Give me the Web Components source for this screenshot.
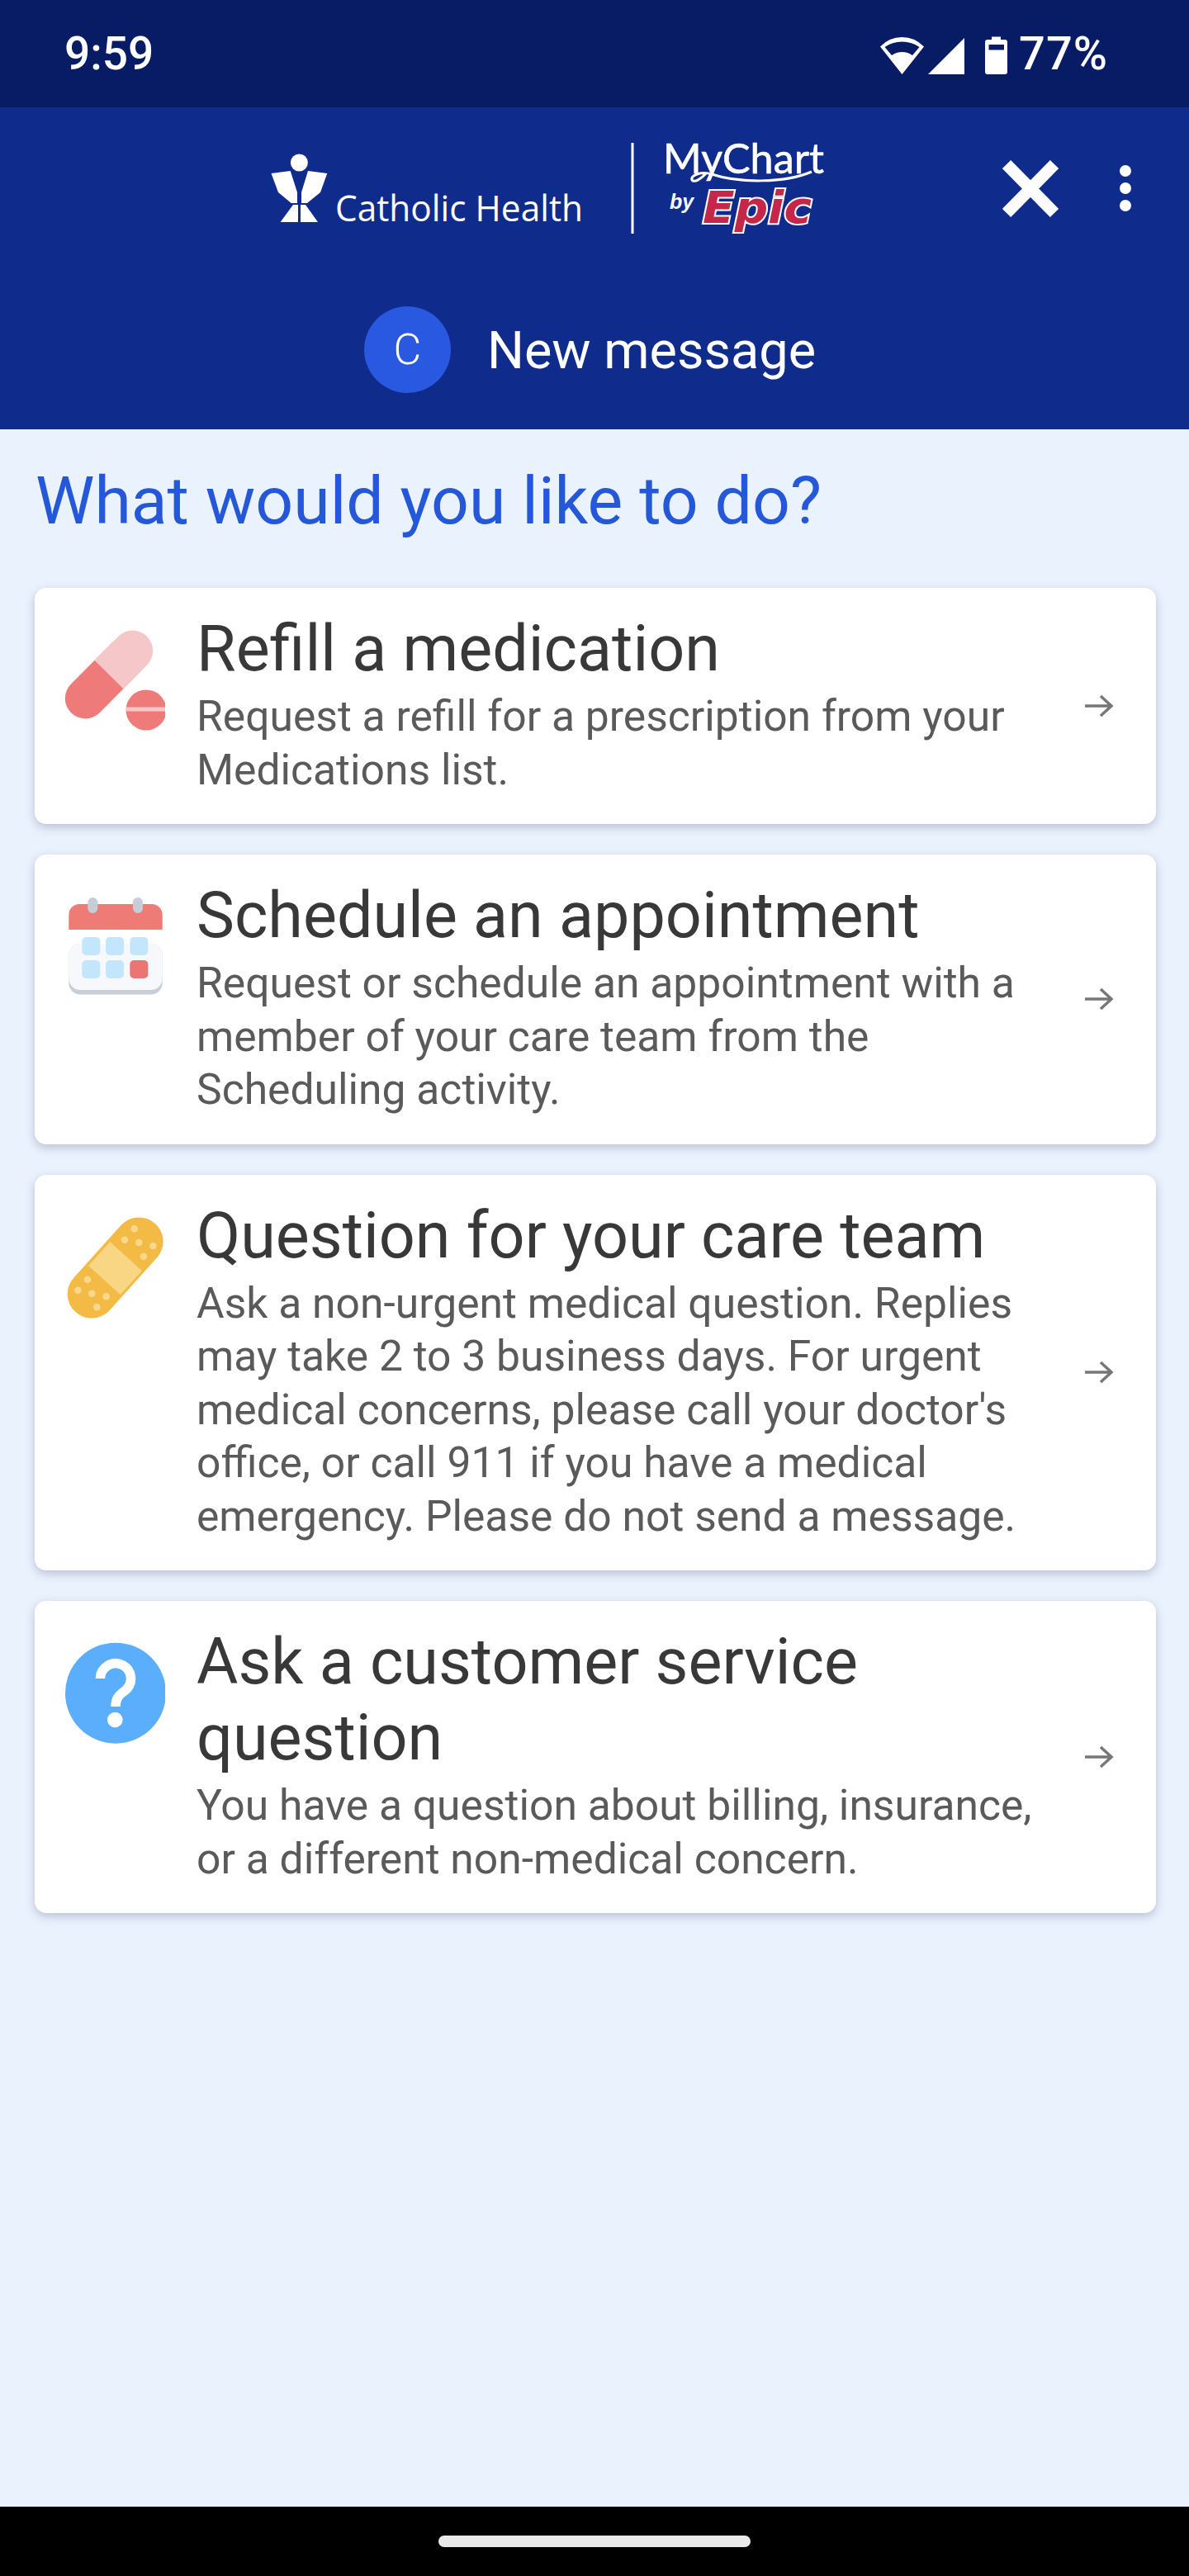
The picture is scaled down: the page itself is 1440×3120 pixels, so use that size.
<!DOCTYPE html>
<html lang="en">
<head>
<meta charset="utf-8">
<style>
  html, body { margin: 0; padding: 0; }
  body { width: 1440px; height: 3120px; overflow: hidden; background: #eaf2fd; font-family: Roboto, "Liberation Sans", sans-serif; }
  .app { display: flex; flex-direction: column; height: 3120px; }
  .app page-body { flex: 1; }
</style>
</head>
<body>
<div class="app">
  <status-bar time="9:59" level="77%"></status-bar>
  <app-header title-text="New message" initial="C"></app-header>
  <page-body heading="What would you like to do?">
    <option-card title-text="Refill a medication">
      <svg slot="icon" viewBox="0 0 128 128" width="128" height="128">
        <g transform="translate(60 57) rotate(-45.2)">
          <rect x="-65.2" y="-24.5" width="120" height="49" rx="24.5" fill="#ee7b79"/>
          <path d="M0 -24.5H40.7A24.5 24.5 0 0 1 40.7 24.5H0Z" fill="#f6c7c9"/>
        </g>
        <circle cx="105" cy="100" r="24.5" fill="#ee7b79"/>
        <rect x="80.5" y="96.5" width="49" height="5" fill="#f9c8c8"/>
      </svg>
      Request a refill for a prescription from your<br>Medications list.
    </option-card>
    <option-card title-text="Schedule an appointment">
      <svg slot="icon" viewBox="0 0 128 128" width="128" height="128">
        <rect x="11.3" y="60" width="113.4" height="61.5" rx="14" fill="#c8ced6"/>
        <rect x="11.3" y="60" width="113.4" height="56" rx="14" fill="#f6f8fb"/>
        <path d="M11.3 43V25a13 13 0 0 1 13-13H111.700a13 13 0 0 1 13 13V43Z" fill="#ee7b76"/>
        <rect x="34.300" y="4" width="12" height="19" rx="6" fill="#c5ced6"/>
        <rect x="89" y="4" width="12" height="19" rx="6" fill="#c5ced6"/>
        <rect x="27.300" y="52" width="22" height="22" rx="5" fill="#c3e6fd"/>
        <rect x="56" y="52" width="22" height="22" rx="5" fill="#c3e6fd"/>
        <rect x="85.300" y="52" width="22" height="22" rx="5" fill="#c3e6fd"/>
        <rect x="27.300" y="80" width="22" height="22" rx="5" fill="#c3e6fd"/>
        <rect x="56" y="80" width="22" height="22" rx="5" fill="#c3e6fd"/>
        <rect x="85.300" y="80" width="22" height="22" rx="5" fill="#ec7472"/>
      </svg>
      Request or schedule an appointment with a<br>member of your care team from the<br>Scheduling activity.
    </option-card>
    <option-card title-text="Question for your care team">
      <svg slot="icon" viewBox="0 0 128 128" width="128" height="128">
        <line x1="39" y1="96.300" x2="96.300" y2="32.700" stroke="#f3bb45" stroke-width="58.600" stroke-linecap="round"/>
        <g transform="translate(67.500 65) rotate(-48)"><rect x="-19.500" y="-26" width="39" height="52" fill="#f8d684"/></g>
        <g fill="#f8d98c">
          <circle cx="90.700" cy="17.300" r="4.300"/><circle cx="79" cy="30.700" r="4.300"/><circle cx="96.300" cy="34" r="4.300"/><circle cx="113.300" cy="38" r="4.300"/><circle cx="102" cy="50.700" r="4.300"/>
          <circle cx="34" cy="78.700" r="4.300"/><circle cx="22.300" cy="91.700" r="4.300"/><circle cx="39.300" cy="95.700" r="4.300"/><circle cx="56.700" cy="99.300" r="4.300"/><circle cx="45.300" cy="112.300" r="4.300"/>
        </g>
      </svg>
      Ask a non-urgent medical question. Replies<br>may take 2 to 3 business days. For urgent<br>medical concerns, please call your doctor's<br>office, or call 911 if you have a medical<br>emergency. Please do not send a message.
    </option-card>
    <option-card title-text="Ask a customer service question">
      <svg slot="icon" viewBox="0 0 128 128" width="128" height="128">
        <circle cx="68" cy="63.700" r="61" fill="#5aaefc"/>
        <path d="M49.500 46A18.500 18.500 0 1 1 79 61C72 66 68 70 68 80" fill="none" stroke="#fff" stroke-width="11.500"/>
        <circle cx="67.300" cy="96" r="9.300" fill="#fff"/>
      </svg>
      You have a question about billing, insurance,<br>or a different non-medical concern.
    </option-card>
  </page-body>
  <nav-bar></nav-bar>
</div>

<script>
class StatusBar extends HTMLElement {
  constructor() {
    super();
    this.attachShadow({ mode: "open" });
  }
  connectedCallback() {
    this.shadowRoot.innerHTML = `
      <style>
        :host {
          display: flex;
          align-items: flex-start;
          justify-content: space-between;
          height: 130px;
          box-sizing: border-box;
          padding: 32px 98px 0 78px;
          background: #071c64;
          color: #fff;
          font: 500 55px/66px Roboto, sans-serif;
        }
        .right { display: flex; align-items: flex-start; }
        svg { display: block; margin-top: 10px; }
        .pct { font-size: 56px; letter-spacing: 1px; }
      </style>
      <span>${this.getAttribute("time")}</span>
      <div class="right">
        <svg width="170" height="48" viewBox="1065 40 170 48">
          <path fill-rule="evenodd" fill="#fff" d="M1093.500 88L1067 54.500Q1078 43 1093.500 43T1120 54.500ZM1072.500 55L1081 65Q1086.500 61 1093.500 61T1106 65L1114.500 55Q1105.500 48.500 1093.500 48.500T1072.500 55Z"/>
          <path fill="#fff" d="M1125 88L1169 44V88Z"/>
          <path fill-rule="evenodd" fill="#fff" d="M1202 46V42.500H1213V46H1218Q1221 46 1221 49V85Q1221 88 1218 88H1197Q1194 88 1194 85V49Q1194 46 1197 46ZM1198.500 52V58.500H1217V52Z"/>
        </svg>
        <span class="pct">${this.getAttribute("level")}</span>
      </div>
    `;
  }
}

class AppHeader extends HTMLElement {
  constructor() {
    super();
    this.attachShadow({ mode: "open" });
  }
  connectedCallback() {
    this.shadowRoot.innerHTML = `
      <style>
        :host {
          display: block;
          height: 390px;
          box-sizing: border-box;
          padding-top: 5px;
          background: #0f2c8c;
          color: #fff;
          font-family: Roboto, sans-serif;
        }
        .top { display: flex; height: 165px; padding-left: 320px; }
        .logo { display: block; }
        .actions { display: flex; align-items: flex-start; margin-left: 214px; padding-top: 55px; }
        .actions svg { display: block; }
        .sub { display: flex; align-items: center; justify-content: flex-start; gap: 44px; margin-top: 70px; padding-left: 441px; }
        .avatar {
          width: 105px; height: 105px; border-radius: 50%;
          background: #2859e0;
          display: flex; align-items: center; justify-content: center;
          font-size: 52px; font-weight: 300;
        }
        .name { font-size: 63px; line-height: 105px; padding-top: 2px; }
      </style>
      <div class="top">
        <svg class="logo" width="680" height="165" viewBox="320 135 680 165">
          <g fill="#fff">
            <circle cx="362.400" cy="197" r="10.500"/>
            <path d="M328.500 210L351.700 207L360 233V246H352.700L337 233Z"/>
            <path d="M396.300 210L373 207L365 233V246H372L388 233Z"/>
            <path d="M339.600 269L355 248H361V269Z"/>
            <path d="M385 269L370 248H364V269Z"/>
            <rect x="764.500" y="173" width="3" height="110"/>
          </g>
          <text x="406" y="268" fill="#fff" font-family="Open Sans" font-weight="500" font-size="43" textLength="300" lengthAdjust="spacingAndGlyphs">Catholic Health</text>
          <text x="803" y="210" fill="#fff" stroke="#fff" stroke-width=".6" font-family="Lato" font-weight="400" font-size="50" textLength="195" lengthAdjust="spacingAndGlyphs">MyChart</text>
          <path d="M983 208C950 222 895 222 862 211C850 207 836 212 838 218C841 222 850 216 856 209" fill="none" stroke="#fff" stroke-width="3"/>
          <text x="811" y="253" fill="#fff" font-family="Liberation Sans" font-weight="700" font-style="italic" font-size="25">by</text>
          <text x="851" y="270" fill="#c4274a" stroke="#fff" stroke-width="4" paint-order="stroke" font-family="DejaVu Sans" font-weight="700" font-style="italic" font-size="54" textLength="132" lengthAdjust="spacingAndGlyphs">Epic</text>
        </svg>
        <div class="actions">
          <svg width="170" height="90" viewBox="1214 190 170 90">
            <path d="M1219 199L1277 258M1277 199L1219 258" stroke="#fff" stroke-width="14.500" fill="none"/>
            <circle cx="1363" cy="207" r="7" fill="#fff"/><circle cx="1363" cy="228" r="7" fill="#fff"/><circle cx="1363" cy="249" r="7" fill="#fff"/>
          </svg>
        </div>
      </div>
      <div class="sub">
        <div class="avatar">${this.getAttribute("initial")}</div>
        <div class="name">${this.getAttribute("title-text")}</div>
      </div>
    `;
  }
}

class PageBody extends HTMLElement {
  constructor() {
    super();
    this.attachShadow({ mode: "open" });
  }
  connectedCallback() {
    this.shadowRoot.innerHTML = `
      <style>
        :host {
          display: block;
          box-sizing: border-box;
          padding: 41px 40px 0 42px;
          background: #eaf2fd;
        }
        h1 {
          margin: 0 0 59px 1px;
          font: 400 80.500px/92px Roboto, sans-serif;
          color: #2458d8;
        }
        .list { display: flex; flex-direction: column; gap: 37px; }
      </style>
      <h1>${this.getAttribute("heading")}</h1>
      <div class="list"><slot></slot></div>
    `;
  }
}

class OptionCard extends HTMLElement {
  constructor() {
    super();
    this.attachShadow({ mode: "open" });
  }
  connectedCallback() {
    this.shadowRoot.innerHTML = `
      <style>
        :host {
          display: flex;
          align-items: stretch;
          box-sizing: border-box;
          padding: 28px 0 33px 30px;
          background: #fff;
          border-radius: 14px;
          box-shadow: 0 4px 12px rgba(70, 80, 125, .3);
          font-family: Roboto, sans-serif;
        }
        .icon { flex: none; width: 128px; margin: 20px 38px 0 0; }
        ::slotted(svg) { display: block; }
        .text { flex: 1; min-width: 0; }
        h2 { margin: 0 0 4px; font: 400 77.300px/92px Roboto, sans-serif; color: #383838; width: 1020px; }
        p { margin: 0; font: 400 51.600px/64.500px Roboto, sans-serif; color: #5a5a5a; white-space: nowrap; }
        .arrow { flex: none; align-self: center; display: block; margin: 5px 51px 0 0; }
      </style>
      <div class="icon"><slot name="icon"></slot></div>
      <div class="text">
        <h2>${this.getAttribute("title-text")}</h2>
        <p><slot></slot></p>
      </div>
      <svg class="arrow" width="36" height="30" viewBox="0 0 36 30">
        <path d="M1 15H33M20 3L33 15L20 27" fill="none" stroke="#777" stroke-width="3.500"/>
      </svg>
    `;
  }
}

class NavBar extends HTMLElement {
  constructor() {
    super();
    this.attachShadow({ mode: "open" });
  }
  connectedCallback() {
    this.shadowRoot.innerHTML = `
      <style>
        :host {
          display: flex;
          align-items: center;
          justify-content: center;
          height: 84px;
          background: #000;
        }
        .handle { width: 378px; height: 14px; border-radius: 7px; background: #eaeaea; }
      </style>
      <div class="handle"></div>
    `;
  }
}

customElements.define("status-bar", StatusBar);
customElements.define("app-header", AppHeader);
customElements.define("page-body", PageBody);
customElements.define("option-card", OptionCard);
customElements.define("nav-bar", NavBar);
</script>
</body>
</html>
